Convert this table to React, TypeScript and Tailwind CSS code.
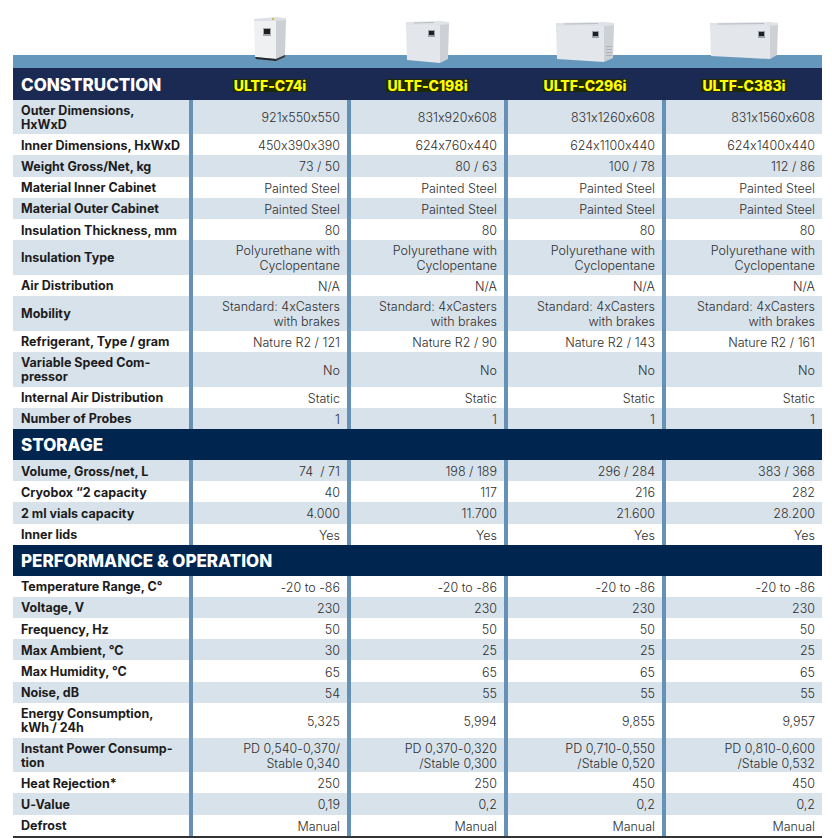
import React from "react";

type Row = { label: string[]; values: (string | string[])[]; double?: boolean };

const cols = "grid grid-cols-[176px_154px_153px_154px_156px] gap-x-[4px]";
const models = ["ULTF-C74i", "ULTF-C198i", "ULTF-C296i", "ULTF-C383i"];

const same = (v: string | string[]) => [v, v, v, v];

const construction: Row[] = [
  { label: ["Outer Dimensions,", "HxWxD"], values: ["921x550x550", "831x920x608", "831x1260x608", "831x1560x608"], double: true },
  { label: ["Inner Dimensions, HxWxD"], values: ["450x390x390", "624x760x440", "624x1100x440", "624x1400x440"] },
  { label: ["Weight Gross/Net, kg"], values: ["73 / 50", "80 / 63", "100 / 78", "112 / 86"] },
  { label: ["Material Inner Cabinet"], values: same("Painted Steel") },
  { label: ["Material Outer Cabinet"], values: same("Painted Steel") },
  { label: ["Insulation Thickness, mm"], values: same("80") },
  { label: ["Insulation Type"], values: same(["Polyurethane with", "Cyclopentane"]), double: true },
  { label: ["Air Distribution"], values: same("N/A") },
  { label: ["Mobility"], values: same(["Standard: 4xCasters", "with brakes"]), double: true },
  { label: ["Refrigerant, Type / gram"], values: ["Nature R2 / 121", "Nature R2 / 90", "Nature R2 / 143", "Nature R2 / 161"] },
  { label: ["Variable Speed Com-", "pressor"], values: same("No"), double: true },
  { label: ["Internal Air Distribution"], values: same("Static") },
  { label: ["Number of Probes"], values: same("1") },
];

const storage: Row[] = [
  { label: ["Volume, Gross/net, L"], values: ["74  / 71", "198 / 189", "296 / 284", "383 / 368"] },
  { label: ["Cryobox “2 capacity"], values: ["40", "117", "216", "282"] },
  { label: ["2 ml vials capacity"], values: ["4.000", "11.700", "21.600", "28.200"] },
  { label: ["Inner lids"], values: same("Yes") },
];

const performance: Row[] = [
  { label: ["Temperature Range, C°"], values: same("-20 to -86") },
  { label: ["Voltage, V"], values: same("230") },
  { label: ["Frequency, Hz"], values: same("50") },
  { label: ["Max Ambient, °C"], values: ["30", "25", "25", "25"] },
  { label: ["Max Humidity, °C"], values: same("65") },
  { label: ["Noise, dB"], values: ["54", "55", "55", "55"] },
  { label: ["Energy Consumption,", "kWh / 24h"], values: ["5,325", "5,994", "9,855", "9,957"], double: true },
  {
    label: ["Instant Power Consump-", "tion"],
    values: [
      ["PD 0,540-0,370/", "Stable 0,340"],
      ["PD 0,370-0,320", "/Stable 0,300"],
      ["PD 0,710-0,550", "/Stable 0,520"],
      ["PD 0,810-0,600", "/Stable 0,532"],
    ],
    double: true,
  },
  { label: ["Heat Rejection*"], values: ["250", "250", "450", "450"] },
  { label: ["U-Value"], values: ["0,19", "0,2", "0,2", "0,2"] },
  { label: ["Defrost"], values: same("Manual") },
];

const Lines = ({ text }: { text: string | string[] }) => {
  const lines = Array.isArray(text) ? text : [text];
  return (
    <>
      {lines.map((l, i) => (
        <span key={i} className="block whitespace-pre">
          {l}
        </span>
      ))}
    </>
  );
};

const DataRows = ({ rows, startLight }: { rows: Row[]; startLight: boolean }) => (
  <>
    {rows.map((r, i) => {
      const light = (i % 2 === 0) === startLight;
      const bg = light ? "bg-[#d8e2eb]" : "bg-white";
      return (
        <div key={i} className={`${cols} bg-[#6491b5] ${r.double ? "h-[34.7px]" : "h-[21.2px]"}`}>
          <div className={`${bg} flex flex-col justify-center pl-[8px] pt-[2px] text-[12.5px] leading-[14px] font-bold text-[#1c1c1c]`}>
            <Lines text={r.label} />
          </div>
          {r.values.map((v, j) => (
            <div key={j} className={`${bg} flex flex-col justify-center items-end text-right pr-[7px] pt-[2px] text-[12.5px] leading-[15px] font-light text-[#2e2e2e]`}>
              <Lines text={v} />
            </div>
          ))}
        </div>
      );
    })}
  </>
);

const Section = ({ title }: { title: string }) => (
  <div className="h-[31px] bg-[#00264f] flex items-center pl-[8px] pt-[3px] text-white font-extrabold text-[17px]">
    {title}
  </div>
);

const Upright = () => (
  <svg width="34" height="46" viewBox="0 0 34 46">
    <polygon points="1,3 23,1 33,2 33,5 23,5 1,6" fill="#dde0e4" />
    <polygon points="1,5 23,5 23,43 2,41" fill="#eef0f2" />
    <polygon points="23,5 33,4 32,39 23,43" fill="#ccd0d5" />
    <polygon points="2,41 23,43 23,45 3,43" fill="#262626" />
    <polygon points="23,43 32,39 32,41 23,45" fill="#3a3a3a" />
    <rect x="10" y="12" width="8" height="8" fill="#a2a7ad" />
    <rect x="11" y="13" width="6" height="5" fill="#1e1e1e" />
    <rect x="19" y="2" width="2" height="2" fill="#d9b84a" />
  </svg>
);

const Chest = ({ w, h, side, disp, vent }: { w: number; h: number; side: number; disp: number; vent?: boolean }) => {
  const f = w - side;
  return (
    <svg width={w} height={h} viewBox={`0 0 ${w} ${h}`}>
      <polygon points={`0,2 ${f},1 ${w},2 ${w},5 ${f},5 0,5`} fill="#dfe2e6" />
      <line x1="8" y1="3" x2={f - 6} y2="2.5" stroke="#b9bec4" strokeWidth="1" />
      <polygon points={`0,5 ${f},5 ${f},${h} 1,${h - 3}`} fill="#e3e6ea" />
      <polygon points={`${f},5 ${w},4 ${w - 1},${h - 4} ${f},${h}`} fill="#cdd1d6" />
      <rect x={disp} y="10" width="7" height="7" fill="#9aa0a7" />
      <rect x={disp + 1} y="11" width="5" height="4" fill="#1f1f1f" />
      {vent && (
        <g fill="#aeb3b9">
          <rect x={f + 2} y={h - 16} width={side - 4} height="1" />
          <rect x={f + 2} y={h - 13} width={side - 4} height="1" />
          <rect x={f + 2} y={h - 10} width={side - 4} height="1" />
          <rect x={f + 2} y={h - 7} width={side - 4} height="1" />
        </g>
      )}
    </svg>
  );
};

export default function App() {
  return (
    <div
      className="w-[832px] h-[838px] overflow-hidden bg-white [font-feature-settings:'calt'_0]"
      style={{ fontFamily: "Inter, 'Noto Sans', sans-serif" }}
    >
      <div className="ml-[13px] w-[809px]">
        <div className={`${cols} h-[55px] items-end`}>
          <div />
          <div className="flex justify-center relative z-10 translate-y-[7px]">
            <Upright />
          </div>
          <div className="flex justify-center relative z-10 translate-y-[8px]">
            <Chest w={43} h={43} side={9} disp={22} />
          </div>
          <div className="flex justify-center relative z-10 translate-y-[7px]">
            <Chest w={58} h={41} side={10} disp={36} vent />
          </div>
          <div className="flex justify-center relative z-10 translate-y-[4px]">
            <Chest w={68} h={38} side={8} disp={48} />
          </div>
        </div>
        <div className="h-[13px] bg-[#6497bb]" />
        <div className={`${cols} h-[31.5px] bg-[#1b2a53] items-center pt-[3px]`}>
          <div className="pl-[8px] text-white font-extrabold text-[17px]">CONSTRUCTION</div>
          {models.map((m) => (
            <div key={m} className="flex justify-center">
              <span className="bg-[#1f2a00] text-[#ffff00] font-extrabold text-[14px] leading-[13px] px-[1px]">{m}</span>
            </div>
          ))}
        </div>
        <DataRows rows={construction} startLight />
        <Section title="STORAGE" />
        <DataRows rows={storage} startLight />
        <Section title="PERFORMANCE & OPERATION" />
        <DataRows rows={performance} startLight={false} />
        <div className="h-[2px] bg-[#333]" />
      </div>
    </div>
  );
}
